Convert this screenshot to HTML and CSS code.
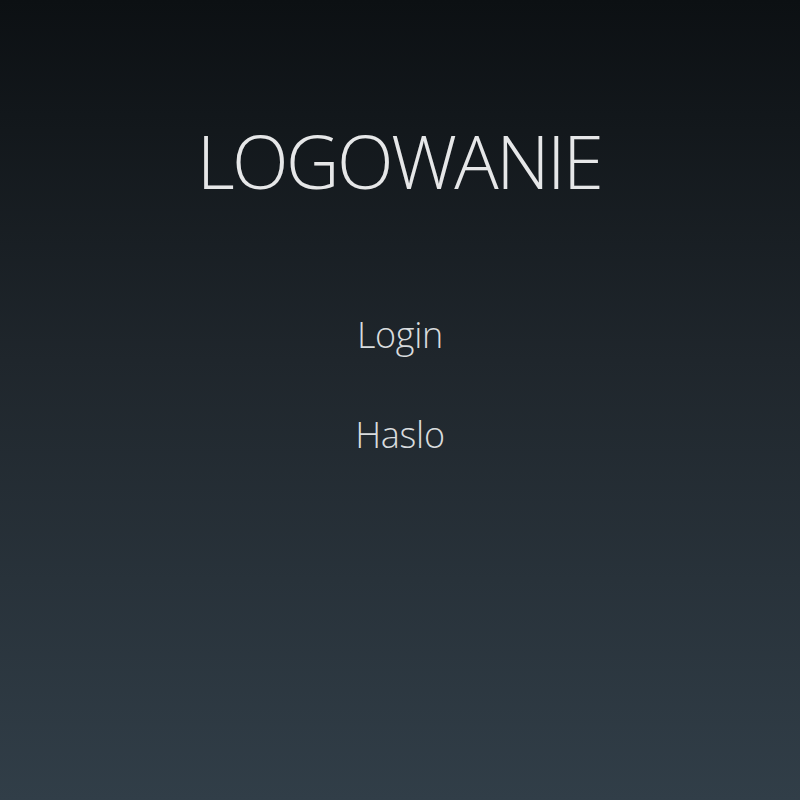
FILE: index.html
```html
<!DOCTYPE html>
<html lang="pl">
<head>
<meta charset="utf-8">
<title>Logowanie</title>
<link rel="stylesheet" href="styles.css">
</head>
<body>
<main class="page">
  <h1 class="title">LOGOWANIE</h1>
  <form class="form">
    <label class="field-label">Login</label>
    <label class="field-label">Haslo</label>
  </form>
</main>
</body>
</html>
```

FILE: styles.css
```css
html, body {
  margin: 0;
  padding: 0;
  height: 100%;
}
body {
  background: linear-gradient(to bottom, #0c1013 0%, #1f262c 45%, #313e48 100%);
  font-family: "Open Sans", "Liberation Sans", sans-serif;
  font-weight: 300;
  color: #e2e4e6;
}
.page {
  display: flex;
  flex-direction: column;
  align-items: center;
  padding-top: 124px;
}
.title {
  margin: 0;
  font-size: 74px;
  line-height: 74px;
  font-weight: 300;
  color: #e6e7e8;
  letter-spacing: -2.6px;
  padding-right: 2px;
}
.form {
  display: flex;
  flex-direction: column;
  align-items: center;
  gap: 63px;
  margin-top: 118px;
}
.field-label {
  font-size: 36px;
  line-height: 37px;
  color: #d9dcde;
  letter-spacing: -0.3px;
}
```
